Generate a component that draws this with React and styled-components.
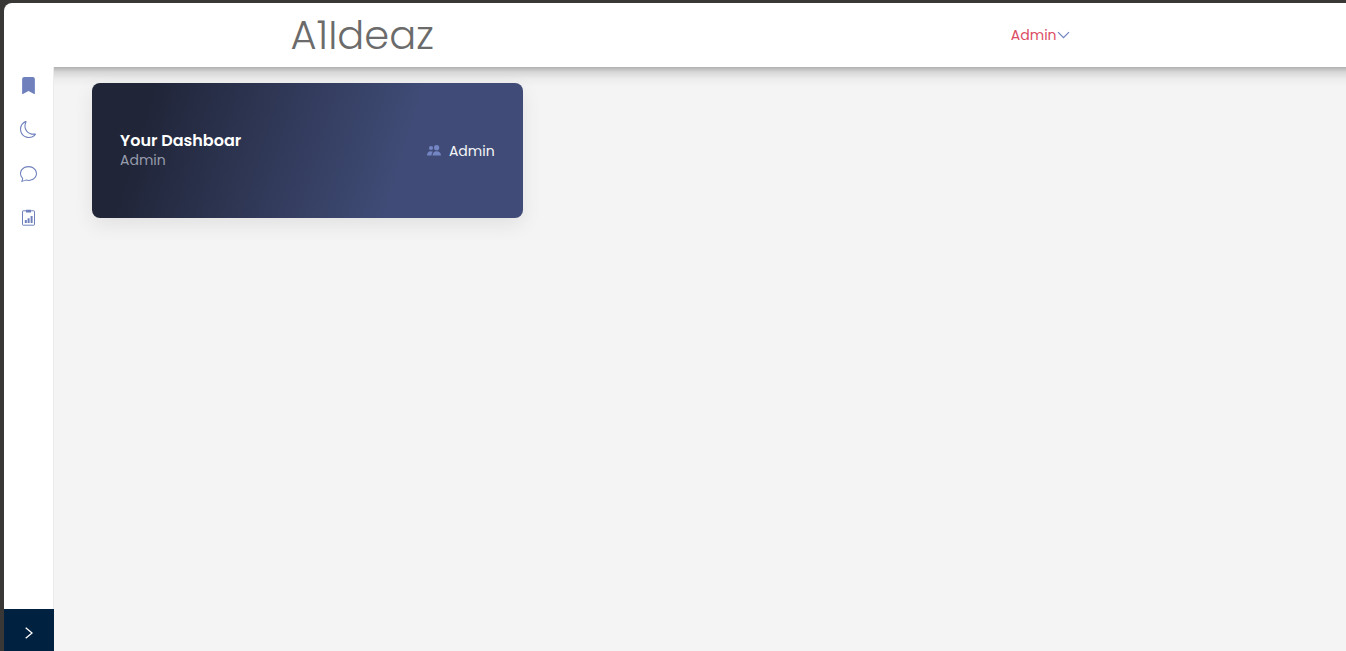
import React from "react";
import styled, { createGlobalStyle } from "styled-components";
import { BsBookmarkFill, BsMoon, BsChat } from "react-icons/bs";

const GlobalStyle = createGlobalStyle`
  *, *::before, *::after { box-sizing: border-box; }
  body {
    margin: 0;
    background: #3a3836;
    font-family: Poppins, Lato, "Liberation Sans", sans-serif;
    font-size: 14px;
  }
  h1, h2, p, ul { margin: 0; padding: 0; }
`;

const Frame = styled.div`
  display: flex;
  flex-direction: column;
  height: 100vh;
  padding: 3px 0 0 4px;
  overflow: hidden;
`;

const Header = styled.header`
  display: grid;
  grid-template-columns: 286fr auto 576fr auto 276fr;
  align-items: center;
  flex: none;
  height: 64px;
  background: #fff;
  border-top-left-radius: 8px;
`;

const Brand = styled.h1`
  grid-column: 2;
  color: #6b6b6b;
  font-size: 40px;
  line-height: 48px;
  font-weight: 300;
`;

const UserMenu = styled.button`
  grid-column: 4;
  display: flex;
  align-items: center;
  padding: 0;
  border: 0;
  background: none;
  color: #dc4c64;
  font: inherit;
  line-height: 20px;
  cursor: pointer;

  svg {
    color: #6f83c1;
  }
`;

const Body = styled.div`
  display: flex;
  flex: 1;
  min-height: 0;
`;

const Sidebar = styled.nav`
  display: flex;
  flex-direction: column;
  justify-content: space-between;
  flex: none;
  width: 50px;
  background: #fff;
`;

const NavList = styled.ul`
  flex: 1;
  list-style: none;
  border-right: 1px solid #ececec;
`;

const NavLink = styled.a`
  display: flex;
  align-items: center;
  justify-content: center;
  height: 44px;
  color: #6f80bd;

  li:first-child & {
    height: 40px;
    padding-bottom: 3px;
  }

  svg {
    width: 17px;
    height: 17px;
  }
`;

const ExpandButton = styled.button`
  display: flex;
  align-items: center;
  justify-content: center;
  height: 42px;
  padding: 6px 0 0;
  border: 0;
  background: #00213f;
  color: #fff;
  cursor: pointer;
`;

const Main = styled.main`
  flex: 1;
  min-width: 0;
  padding-top: 16px;
  background:
    linear-gradient(rgba(0, 0, 0, 0.28), rgba(0, 0, 0, 0.12) 5px, rgba(0, 0, 0, 0.03) 12px, transparent 20px),
    #f4f4f4;
`;

const Card = styled.section`
  display: flex;
  align-items: center;
  justify-content: space-between;
  width: calc(100% / 3);
  min-height: 135px;
  margin-left: 38px;
  padding: 0 28px;
  border-radius: 8px;
  background: linear-gradient(107deg, #202538 13%, #404c77 71%);
  box-shadow: 0 7px 20px rgba(0, 0, 0, 0.08);
`;

const CardTitle = styled.h2`
  color: #fff;
  font-size: 16px;
  line-height: 19px;
  font-weight: 600;
`;

const CardSubtitle = styled.p`
  color: #979cab;
  line-height: 20px;
`;

const Role = styled.p`
  display: flex;
  align-items: center;
  gap: 8px;
  color: #f4f5f8;
  line-height: 20px;

  svg {
    color: #7485c4;
  }
`;

function ChevronDown() {
  return (
    <svg width="13" height="8" viewBox="0 0 13 8" fill="none" stroke="currentColor" strokeWidth="1.2" aria-hidden="true">
      <path d="M1 1.2 6.5 6.7 12 1.2" />
    </svg>
  );
}

function ChevronRight() {
  return (
    <svg width="8" height="12" viewBox="0 0 8 12" fill="none" stroke="currentColor" strokeWidth="1.3" aria-hidden="true">
      <path d="M0.7 0.8 7 6 0.7 11.2" />
    </svg>
  );
}

function ClipboardChart() {
  return (
    <svg viewBox="0 0 17 17" fill="none" aria-hidden="true">
      <rect x="2.5" y="1.8" width="12" height="14.4" rx="0.6" stroke="currentColor" />
      <path
        fill="currentColor"
        d="M6 .8h5v2.7H6zM4.800 11h2v3h-2zM7.600 9.200h2v4.800h-2zM10.600 7h2v7h-2z"
      />
    </svg>
  );
}

function People() {
  return (
    <svg width="14" height="12" viewBox="0 0 14 12" fill="currentColor" aria-hidden="true">
      <circle cx="4" cy="3" r="2.1" />
      <circle cx="9.6" cy="2.7" r="2.6" />
      <path d="M0 10.5C0 7.800 1.400 6.200 3.700 6.200q1.300 0 2.100.5C4.900 7.600 4.600 9 4.600 10.500zM5.500 10.500C5.500 7.800 7 6.200 9.700 6.200S14 7.800 14 10.500z" />
    </svg>
  );
}

const links = [
  { label: "Bookmarks", Icon: BsBookmarkFill },
  { label: "Dark mode", Icon: BsMoon },
  { label: "Messages", Icon: BsChat },
  { label: "Reports", Icon: ClipboardChart },
];

export default function App() {
  return (
    <>
      <GlobalStyle />
      <Frame>
        <Header>
          <Brand>A1Ideaz</Brand>
          <UserMenu type="button" aria-haspopup="menu">
            Admin
            <ChevronDown />
          </UserMenu>
        </Header>
        <Body>
          <Sidebar>
            <NavList>
              {links.map(({ label, Icon }) => (
                <li key={label}>
                  <NavLink href="#" aria-label={label}>
                    <Icon aria-hidden="true" />
                  </NavLink>
                </li>
              ))}
            </NavList>
            <ExpandButton type="button" aria-label="Expand sidebar">
              <ChevronRight />
            </ExpandButton>
          </Sidebar>
          <Main>
            <Card>
              <div>
                <CardTitle>Your Dashboar</CardTitle>
                <CardSubtitle>Admin</CardSubtitle>
              </div>
              <Role>
                <People />
                Admin
              </Role>
            </Card>
          </Main>
        </Body>
      </Frame>
    </>
  );
}
